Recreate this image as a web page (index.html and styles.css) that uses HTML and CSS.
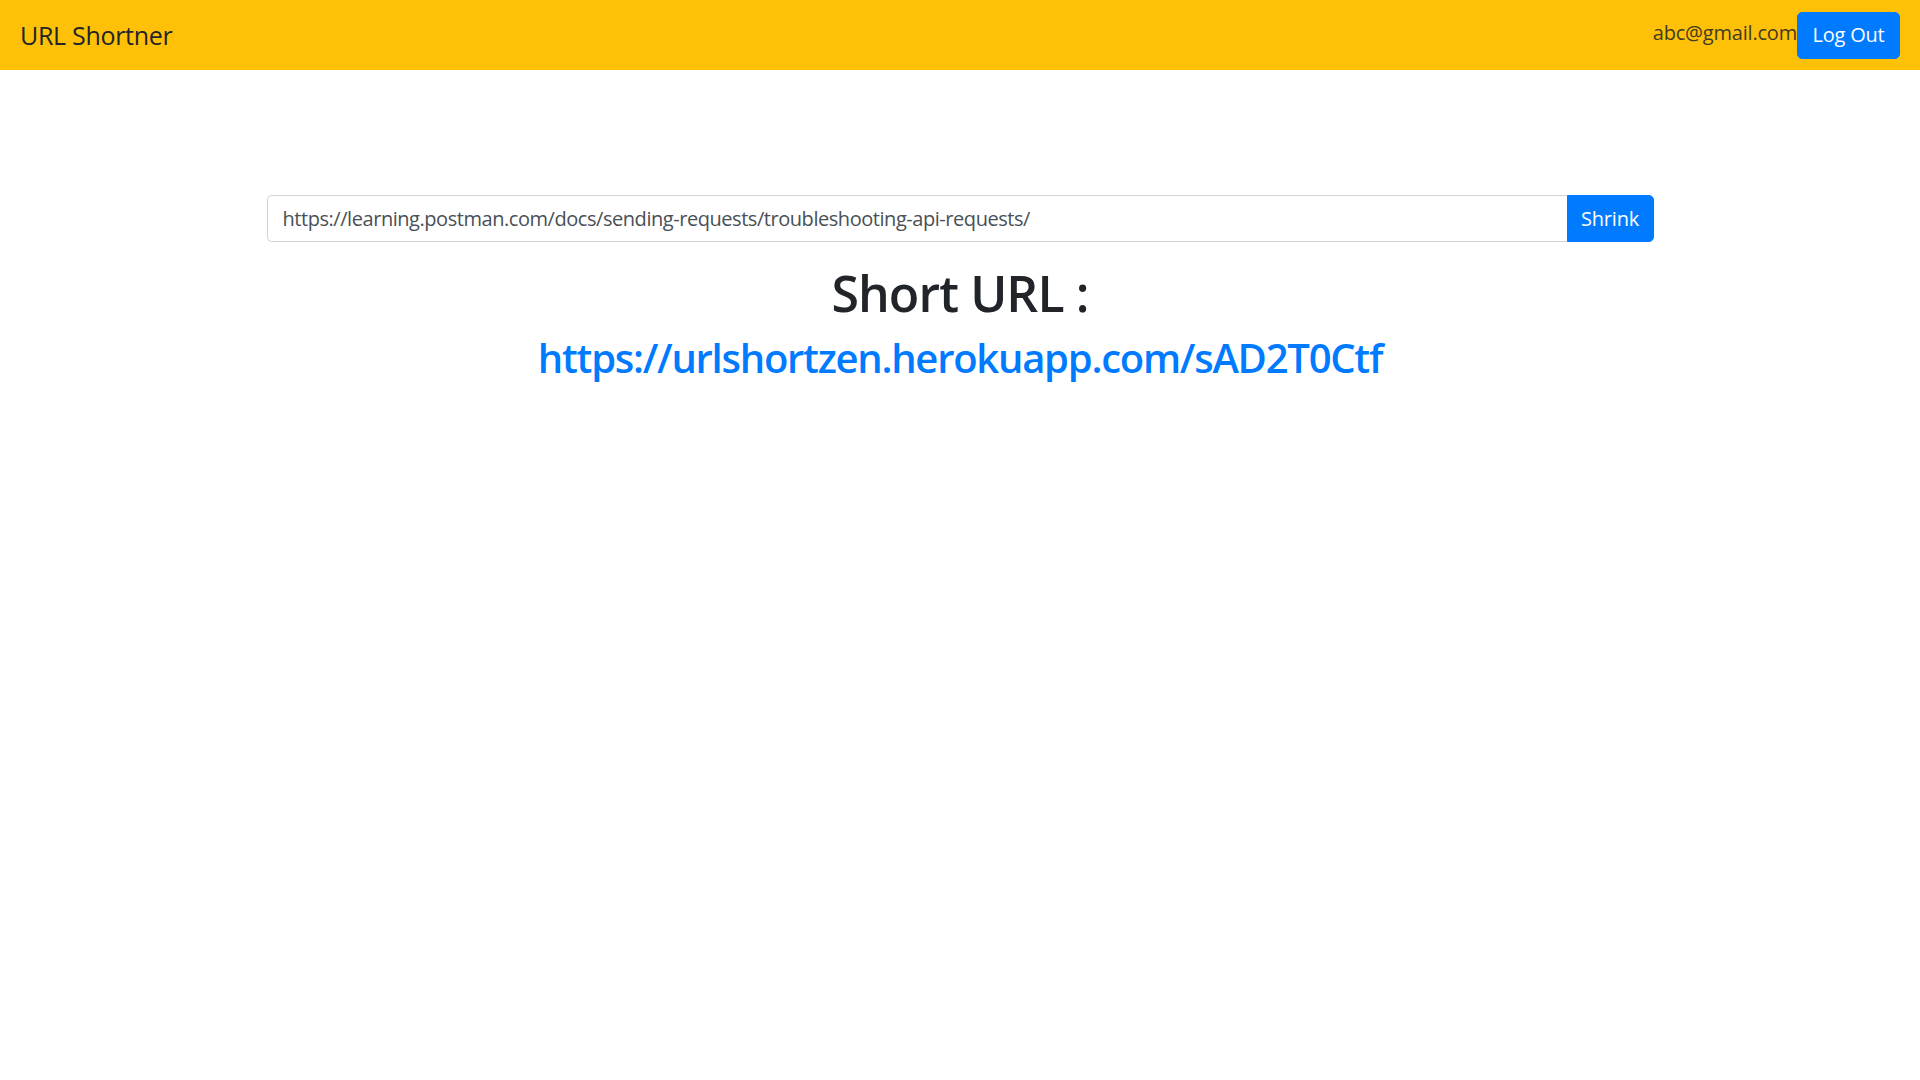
FILE: index.html
```
<!DOCTYPE html>
<html>
<head>
<meta charset="utf-8">
<link rel="stylesheet" href="styles.css">
</head>
<body>
<nav class="navbar">
  <span class="brand">URL Shortner</span>
  <div class="nav-right">
    <span class="email">abc@gmail.com</span>
    <button class="btn btn-primary btn-logout">Log Out</button>
  </div>
</nav>
<main class="container">
  <form class="input-group">
    <input class="form-control" type="text" value="https://learning.postman.com/docs/sending-requests/troubleshooting-api-requests/">
    <button class="btn btn-primary btn-shrink" type="button">Shrink</button>
  </form>
  <h1 class="title">Short URL :</h1>
  <h2 class="result"><a href="#">https://urlshortzen.herokuapp.com/sAD2T0Ctf</a></h2>
</main>
</body>
</html>
```
FILE: styles.css
```
* { box-sizing: border-box; }
html, body { margin: 0; padding: 0; }
body {
  font-family: "Open Sans", "Noto Sans", sans-serif;
  font-size: 20px;
  line-height: 1.5;
  color: #212529;
  background: #fff;
}
.navbar {
  background: #ffc107;
  height: 70px;
  padding: 0 20px;
  display: flex;
  align-items: center;
  justify-content: space-between;
}
.brand {
  font-size: 25px;
  color: #212529;
  line-height: 37px;
  letter-spacing: -0.3px;
}
.nav-right {
  display: flex;
  align-items: center;
}
.email {
  font-size: 20px;
  color: #212529;
  opacity: 0.85;
  margin-top: -4px;
  letter-spacing: -0.2px;
}
.btn {
  font-family: inherit;
  border: 1px solid #007bff;
  background: #007bff;
  color: #fff;
  font-size: 20px;
  line-height: 1.5;
  padding: 0 15px;
  border-radius: 5px;
  cursor: pointer;
  letter-spacing: -0.2px;
}
.btn-logout {
  height: 47px;
  width: 103px;
  padding: 0;
}
.container {
  width: 1425px;
  margin: 0 auto;
  padding: 125px 19px 0;
}
.input-group {
  display: flex;
  margin: 0 0 21px;
}
.form-control {
  flex: 1;
  height: 47px;
  border: 1px solid #ced4da;
  border-right: none;
  border-radius: 5px 0 0 5px;
  padding: 0 15px;
  font-family: inherit;
  font-size: 20px;
  letter-spacing: -0.45px;
  color: #495057;
  outline: none;
}
.btn-shrink {
  height: 47px;
  width: 87px;
  padding: 0;
  border-radius: 0 5px 5px 0;
}
.title {
  font-size: 50px;
  font-weight: 600;
  line-height: 60px;
  letter-spacing: -0.9px;
  margin: 0 0 11px;
  text-align: center;
}
.result {
  font-size: 40px;
  font-weight: 600;
  line-height: 48px;
  letter-spacing: -1.25px;
  margin: 0;
  text-align: center;
}
.result a {
  color: #007bff;
  text-decoration: none;
}
```
